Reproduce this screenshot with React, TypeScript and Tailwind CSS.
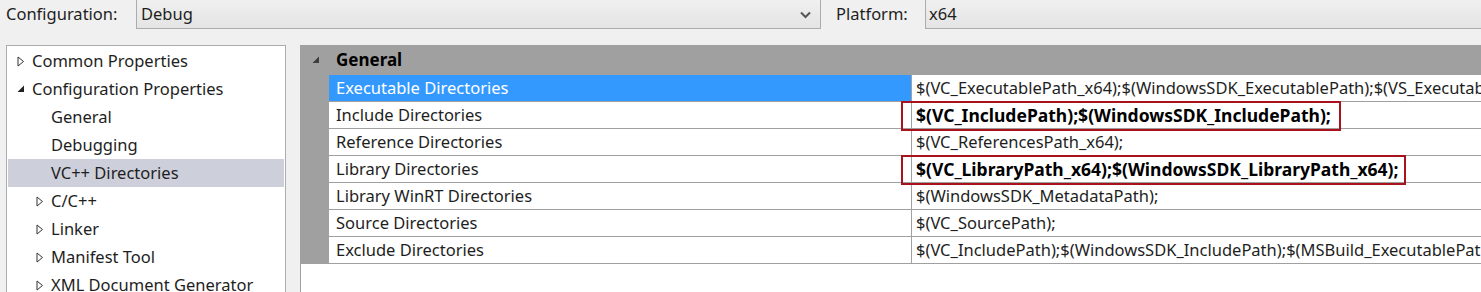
import React from 'react';

const font = { fontFamily: '"Noto Sans", "Open Sans", Arial, sans-serif' };

function Collapsed() {
    return (
        <svg width="8" height="11" viewBox="0 0 8 11" className="shrink-0">
            <path d="M1 1 L6.5 5.5 L1 10 Z" fill="white" stroke="#333" strokeWidth="1" />
        </svg>
    );
}

function Expanded({ color = '#222' }: { color?: string }) {
    return (
        <svg width="8" height="8" viewBox="0 0 8 8" className="shrink-0">
            <path d="M7 0.5 L7 7 L0.5 7 Z" fill={color} />
        </svg>
    );
}

type TreeItem = { label: string; level: 0 | 1; icon?: 'c' | 'e'; selected?: boolean };

const tree: TreeItem[] = [
    { label: 'Common Properties', level: 0, icon: 'c' },
    { label: 'Configuration Properties', level: 0, icon: 'e' },
    { label: 'General', level: 1 },
    { label: 'Debugging', level: 1 },
    { label: 'VC++ Directories', level: 1, selected: true },
    { label: 'C/C++', level: 1, icon: 'c' },
    { label: 'Linker', level: 1, icon: 'c' },
    { label: 'Manifest Tool', level: 1, icon: 'c' },
    { label: 'XML Document Generator', level: 1, icon: 'c' },
];

type Row = { name: string; value: string; bold?: boolean; selected?: boolean; box?: number };

const rows: Row[] = [
    { name: 'Executable Directories', value: '$(VC_ExecutablePath_x64);$(WindowsSDK_ExecutablePath);$(VS_ExecutablePath);$(MSBuild_ExecutablePath);$(FxCopDir);$(PATH);', selected: true },
    { name: 'Include Directories', value: '$(VC_IncludePath);$(WindowsSDK_IncludePath);', bold: true, box: 440 },
    { name: 'Reference Directories', value: '$(VC_ReferencesPath_x64);' },
    { name: 'Library Directories', value: '$(VC_LibraryPath_x64);$(WindowsSDK_LibraryPath_x64);', bold: true, box: 505 },
    { name: 'Library WinRT Directories', value: '$(WindowsSDK_MetadataPath);' },
    { name: 'Source Directories', value: '$(VC_SourcePath);' },
    { name: 'Exclude Directories', value: '$(VC_IncludePath);$(WindowsSDK_IncludePath);$(MSBuild_ExecutablePath);$(VC_LibraryPath_x64);' },
];

export default function App() {
    return (
        <div className="w-[1481px] h-[292px] overflow-hidden bg-[#f0f0f0] text-[16.5px] text-[#1e1e1e]" style={font}>
            {/* top bar */}
            <div className="flex items-start h-[45px]">
                <div className="ml-[6px] w-[130px] h-[29px] flex items-center whitespace-nowrap">Configuration:</div>
                <div className="-mt-px h-[30px] w-[685px] flex items-center justify-between border border-[#acacac] bg-gradient-to-b from-[#f0f0f0] to-[#e4e4e4]">
                    <span className="ml-[4px] mt-px">Debug</span>
                    <svg width="11" height="8" viewBox="0 0 11 8" className="mr-[9px] mt-px">
                        <path d="M1 1.5 L5.5 6 L10 1.5" fill="none" stroke="#555" strokeWidth="2" />
                    </svg>
                </div>
                <div className="ml-[15px] w-[89px] h-[29px] flex items-center whitespace-nowrap">Platform:</div>
                <div className="-mt-px h-[30px] flex-1 flex items-center border border-r-0 border-[#acacac] bg-gradient-to-b from-[#f0f0f0] to-[#e4e4e4]">
                    <span className="ml-[3px] mt-px">x64</span>
                </div>
            </div>

            {/* body */}
            <div className="flex h-[247px]">
                {/* tree */}
                <div className="ml-[6px] w-[280px] h-[260px] border border-[#acacac] bg-white pt-[1px] px-px">
                    {tree.map((t) => (
                        <div
                            key={t.label}
                            className={`h-[28px] flex items-center ${t.selected ? 'bg-[#cdcfdb]' : ''}`}
                        >
                            <div className={`${t.level === 0 ? 'ml-[9px]' : 'ml-[28px]'} w-[15px] flex items-center`}>
                                {t.icon === 'c' && <Collapsed />}
                                {t.icon === 'e' && <Expanded />}
                            </div>
                            <span className="whitespace-nowrap">{t.label}</span>
                        </div>
                    ))}
                </div>

                {/* property grid */}
                <div className="ml-[14px] flex-1 bg-white border-l border-[#a0a0a0] overflow-hidden">
                    <div className="h-[30px] flex items-center bg-[#a0a0a0]">
                        <div className="w-[29px] pl-[11px] flex items-center">
                            <Expanded color="#3c3c3c" />
                        </div>
                        <span className="ml-[6px] text-[17px] font-bold text-black">General</span>
                    </div>
                    {rows.map((r) => (
                        <div key={r.name} className="flex h-[27px]">
                            <div className="w-[28px] shrink-0 bg-[#a0a0a0]" />
                            <div
                                className={`w-[583px] shrink-0 flex items-center pl-[7px] border-b border-r border-[#a0a0a0] whitespace-nowrap ${
                                    r.selected ? 'bg-[#3399ff] text-white' : 'text-[#1e1e1e]'
                                }`}
                            >
                                {r.name}
                            </div>
                            <div className="relative flex-1 min-w-0 flex items-center pl-[4px] border-b border-[#a0a0a0]">
                                <span className={`whitespace-nowrap ${r.bold ? 'text-[17.5px] font-bold text-black' : ''}`}>{r.value}</span>
                                {r.box && (
                                    <div
                                        className="absolute left-[-11px] top-[-1px] h-[30px] border-2 border-[#a8121b]"
                                        style={{ width: r.box }}
                                    />
                                )}
                            </div>
                        </div>
                    ))}
                </div>
            </div>
        </div>
    );
}
